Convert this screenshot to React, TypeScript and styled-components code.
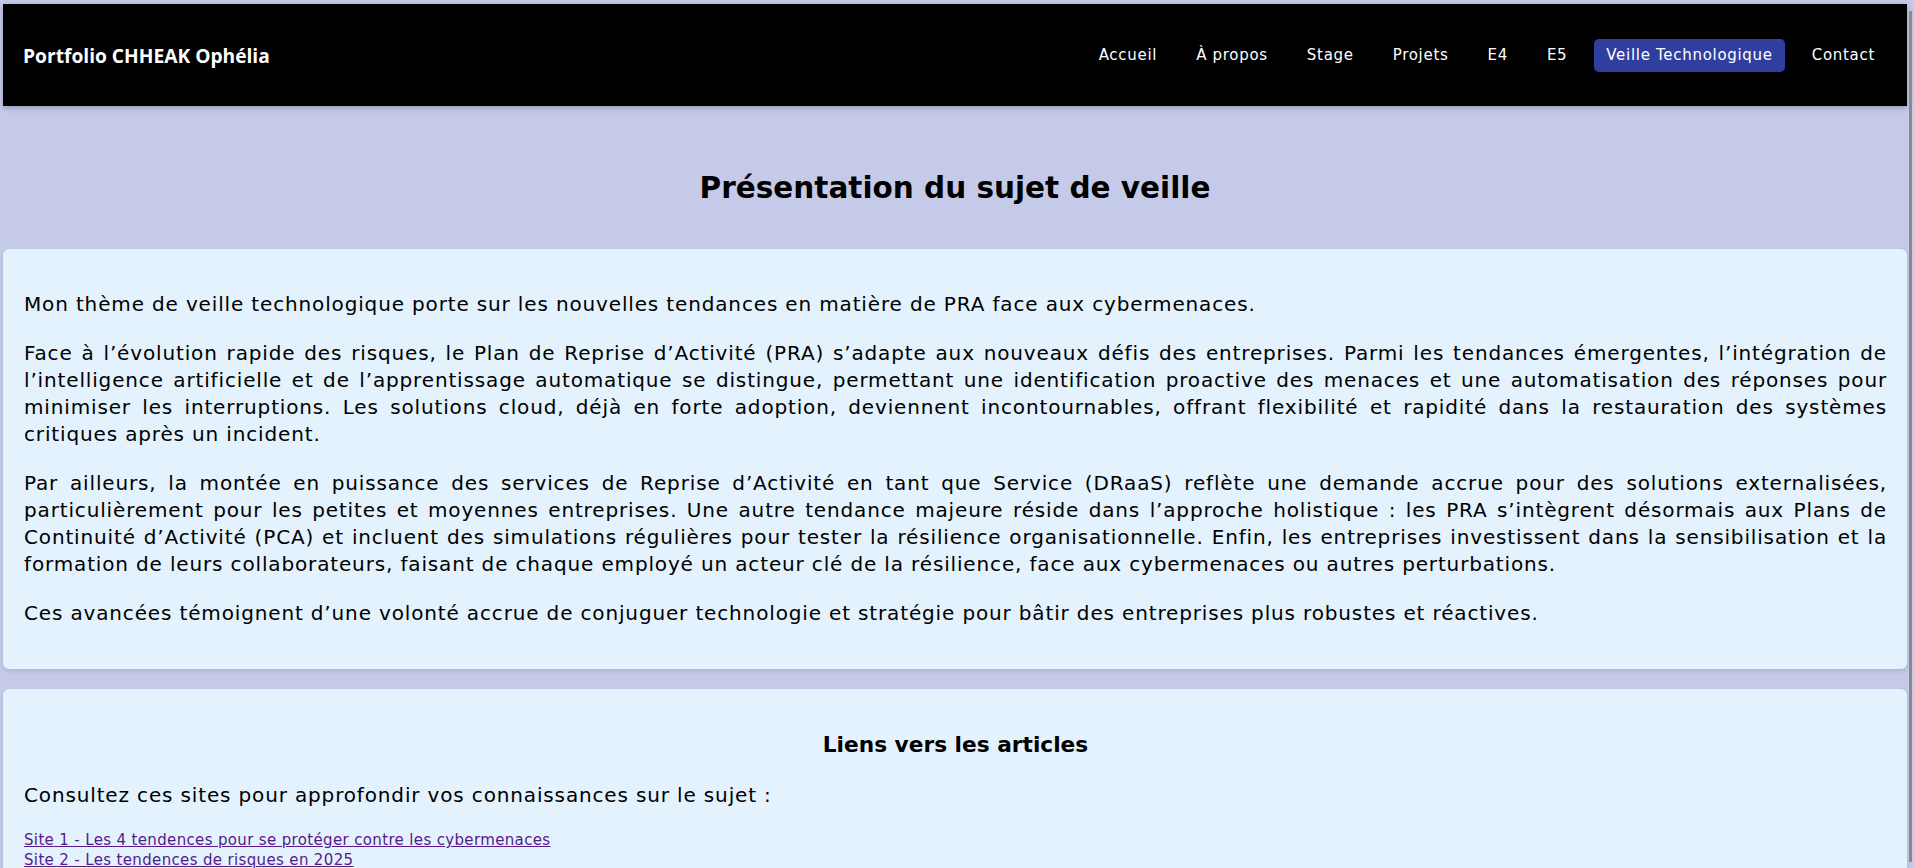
import React from 'react';
import styled, { createGlobalStyle } from 'styled-components';

const GlobalStyle = createGlobalStyle`
    html, body {
        margin: 0;
        padding: 0;
        background: #c5cae9;
        font-family: "DejaVu Sans", "Noto Sans", sans-serif;
        color: #000;
    }
`;

const Shell = styled.div`
    display: flex;
    height: 100vh;
    overflow: hidden;
`;

const Page = styled.div`
    flex: 1;
    min-width: 0;
    display: flex;
    flex-direction: column;
    padding: 4px 0 0 3px;
`;

const ScrollGutter = styled.div`
    width: 7px;
    display: flex;
    flex-direction: column;
    padding: 11px 0 6px 2px;
    box-sizing: border-box;
`;

const ScrollThumb = styled.div`
    flex: 1;
    width: 3px;
    background: #8a8a8a;
`;

const Header = styled.header`
    height: 102px;
    flex-shrink: 0;
    background: #000;
    display: flex;
    align-items: center;
    justify-content: space-between;
    padding: 0 20px;
    box-shadow: 0 2px 6px rgba(0, 0, 0, 0.25);
`;

const Logo = styled.div`
    color: #fff;
    font-family: "Open Sans", "Noto Sans", sans-serif;
    font-weight: 700;
    font-size: 19.2px;
`;

const Nav = styled.nav`
    display: flex;
    align-items: center;
    gap: 15px;
`;

const NavLink = styled.a<{ $active?: boolean }>`
    color: #fff;
    text-decoration: none;
    font-size: 15px;
    letter-spacing: 0.7px;
    line-height: 17px;
    padding: 8px 12px;
    border-radius: 5px;
    background: ${({ $active }) => ($active ? '#303f9f' : 'transparent')};
`;

const Title = styled.h2`
    text-align: center;
    margin: 62px 0 41px;
    font-size: 29.5px;
    line-height: 40px;
    font-weight: 700;
`;

const Card = styled.section`
    background: #e3f2fd;
    border-radius: 6px;
    padding: 20px 20px 20px 21px;
    margin-bottom: 20px;
    box-shadow: 0 2px 5px rgba(0, 0, 0, 0.12);
    flex-shrink: 0;
`;

const Paragraph = styled.p<{ $justify?: boolean }>`
    margin: 22px 0;
    font-size: 20px;
    letter-spacing: 0.85px;
    line-height: 27px;
    text-align: ${({ $justify }) => ($justify ? 'justify' : 'left')};
`;

const CardTitle = styled.h3`
    text-align: center;
    margin: 21px 0 21px;
    font-size: 21.7px;
    line-height: 30px;
    font-weight: 700;
`;

const Intro = styled.p`
    margin: 0 0 22px;
    font-size: 20px;
    letter-spacing: 0.85px;
    line-height: 28px;
`;

const LinkList = styled.div`
    display: flex;
    flex-direction: column;
    align-items: flex-start;
`;

const ArticleLink = styled.a`
    color: #551a8b;
    font-size: 15px;
    letter-spacing: 0.35px;
    line-height: 19.5px;
    text-decoration: underline;
`;

const navItems = ['Accueil', 'À propos', 'Stage', 'Projets', 'E4', 'E5', 'Veille Technologique', 'Contact'];

const articles = [
    'Site 1 - Les 4 tendences pour se protéger contre les cybermenaces',
    'Site 2 - Les tendences de risques en 2025',
];

export default function App() {
    return (
        <>
            <GlobalStyle />
            <Shell>
                <Page>
                    <Header>
                        <Logo>Portfolio CHHEAK Ophélia</Logo>
                        <Nav>
                            {navItems.map((item) => (
                                <NavLink key={item} href="#" $active={item === 'Veille Technologique'}>
                                    {item}
                                </NavLink>
                            ))}
                        </Nav>
                    </Header>

                    <Title>Présentation du sujet de veille</Title>

                    <Card>
                        <Paragraph>
                            Mon thème de veille technologique porte sur les nouvelles tendances en matière de PRA face aux cybermenaces.
                        </Paragraph>
                        <Paragraph $justify>
                            Face à l’évolution rapide des risques, le Plan de Reprise d’Activité (PRA) s’adapte aux nouveaux défis des entreprises. Parmi les tendances émergentes, l’intégration de l’intelligence artificielle et de l’apprentissage automatique se distingue, permettant une identification proactive des menaces et une automatisation des réponses pour minimiser les interruptions. Les solutions cloud, déjà en forte adoption, deviennent incontournables, offrant flexibilité et rapidité dans la restauration des systèmes critiques après un incident.
                        </Paragraph>
                        <Paragraph $justify>
                            Par ailleurs, la montée en puissance des services de Reprise d’Activité en tant que Service (DRaaS) reflète une demande accrue pour des solutions externalisées, particulièrement pour les petites et moyennes entreprises. Une autre tendance majeure réside dans l’approche holistique : les PRA s’intègrent désormais aux Plans de Continuité d’Activité (PCA) et incluent des simulations régulières pour tester la résilience organisationnelle. Enfin, les entreprises investissent dans la sensibilisation et la formation de leurs collaborateurs, faisant de chaque employé un acteur clé de la résilience, face aux cybermenaces ou autres perturbations.
                        </Paragraph>
                        <Paragraph>
                            Ces avancées témoignent d’une volonté accrue de conjuguer technologie et stratégie pour bâtir des entreprises plus robustes et réactives.
                        </Paragraph>
                    </Card>

                    <Card>
                        <CardTitle>Liens vers les articles</CardTitle>
                        <Intro>Consultez ces sites pour approfondir vos connaissances sur le sujet :</Intro>
                        <LinkList>
                            {articles.map((a) => (
                                <ArticleLink key={a} href="#">{a}</ArticleLink>
                            ))}
                        </LinkList>
                    </Card>
                </Page>
                <ScrollGutter>
                    <ScrollThumb />
                </ScrollGutter>
            </Shell>
        </>
    );
}
